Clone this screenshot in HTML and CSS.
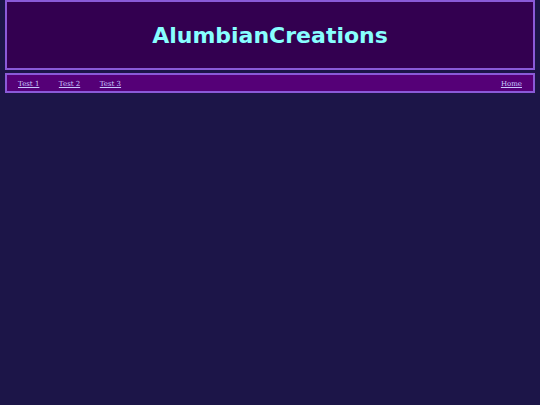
FILE: index.html
```html
<!DOCTYPE html>
<html>
<head>
<meta charset="utf-8">
<link rel="stylesheet" href="styles.css">
</head>
<body>
<div class="header"><h1 class="title">AlumbianCreations</h1></div>
<div class="nav">
  <div class="links">
    <a href="#">Test 1</a>
    <a href="#">Test 2</a>
    <a href="#">Test 3</a>
  </div>
  <a href="#">Home</a>
</div>
</body>
</html>
```
FILE: styles.css
```css
html, body {
  margin: 0;
  padding: 0;
  background: #1c1548;
}
body {
  padding: 0 5px;
  font-family: "DejaVu Sans", Verdana, sans-serif;
}
.header {
  height: 66px;
  background: #330050;
  border: 2px solid #8a5ad8;
  display: flex;
  align-items: center;
  justify-content: center;
}
.title {
  margin: 0;
  font-size: 22px;
  font-weight: bold;
  color: #88ffff;
}
.nav {
  margin-top: 3px;
  height: 15px;
  background: #550077;
  border: 2px solid #8a5ad8;
  display: flex;
  align-items: center;
  justify-content: space-between;
  padding: 1px 11px 0 11px;
  font-family: "DejaVu Serif", serif;
  font-size: 7px;
}
.links {
  display: flex;
  gap: 19.5px;
}
.nav a {
  color: #c8c8ff;
}
```
